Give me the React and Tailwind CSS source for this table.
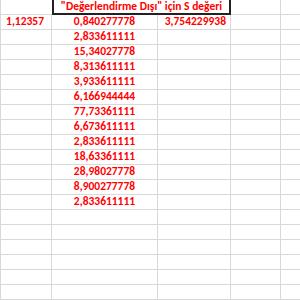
const values = [
  '0,840277778',
  '2,833611111',
  '15,34027778',
  '8,313611111',
  '3,933611111',
  '6,166944444',
  '77,73361111',
  '6,673611111',
  '2,833611111',
  '18,63361111',
  '28,98027778',
  '8,900277778',
  '2,833611111',
];

const rows = [
  ...values.map((v, i) => ({ a: i === 0 ? '1,12357' : '', b: v, c: i === 0 ? '3,754229938' : '' })),
  ...Array.from({ length: 6 }, () => ({ a: '', b: '', c: '' })),
];

const cell = 'h-[15px] shrink-0 border-r border-b border-[#d9d9d9] flex items-center leading-none';

export default function App() {
  return (
    <div
      className="w-[300px] h-[300px] overflow-hidden bg-white text-[#ff0000] font-bold text-[11.5px]"
      style={{ fontFamily: 'Carlito, "Liberation Sans", Arial, sans-serif' }}
    >
      {/* header row */}
      <div className="flex">
        <div className="h-[15px] w-[52px] shrink-0 border-l border-b border-[#d9d9d9]" />
        <div className="h-[15px] w-[179px] shrink-0 border-2 border-t-0 border-[#222] flex items-center justify-center leading-none">
          "Değerlendirme Dışı" için S değeri
        </div>
        <div className={`${cell} w-[50px]`} />
        <div className={`${cell} flex-1 border-r-0`} />
      </div>

      {rows.map((r, i) => (
        <div key={i} className="flex">
          <div className={`${cell} w-[52px] border-l justify-end pr-[7px]`}>{r.a}</div>
          <div className={`${cell} w-[106px] justify-center`}>{r.b}</div>
          <div className={`${cell} w-[73px] justify-end pr-[4px]`}>{r.c}</div>
          <div className={`${cell} w-[50px]`} />
          <div className={`${cell} flex-1 border-r-0`} />
        </div>
      ))}
    </div>
  );
}
